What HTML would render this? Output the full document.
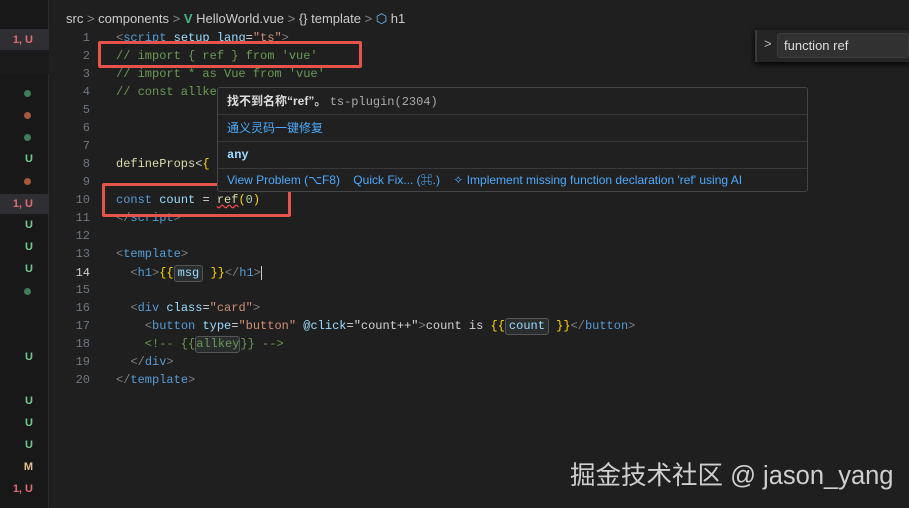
<!DOCTYPE html>
<html><head><meta charset="utf-8"><style>
*{margin:0;padding:0;box-sizing:border-box}
body{width:909px;height:508px;background:#1f1f1f;overflow:hidden;position:relative;font-family:"Liberation Sans","Noto Sans CJK SC",sans-serif}
.side{position:absolute;left:0;top:0;width:49px;height:508px;background:#181818;border-right:1px solid #2b2b2b}
.g{position:absolute;left:0;width:49px;text-align:right;padding-right:16px;font-size:11px;font-weight:bold;height:18px;line-height:18px}
.dot{position:absolute;left:24px;width:7px;height:7px;border-radius:50%}
.bc{position:absolute;left:66px;top:11px;font-size:13px;color:#cccccc;white-space:pre}
.code{position:absolute;left:0;top:29px;font-family:"Liberation Mono","Noto Sans CJK SC",monospace;font-size:12px;color:#d4d4d4}
.l{height:18px;line-height:18px;white-space:pre;position:relative}
.n{position:absolute;left:50px;width:40px;text-align:right;color:#6e7681}
.t{position:absolute;left:116px}
.c{color:#6a9955}.k{color:#569cd6}.v{color:#9cdcfe}.f{color:#dcdcaa}.s{color:#ce9178}.p{color:#808080}.y{color:#ffd700}.w{color:#d4d4d4}
.box{display:inline-block;border:1px solid #555;border-radius:3px;background:#2a2d2e;padding:0 3px;line-height:15px}
.hov{position:absolute;left:217px;top:87px;width:591px;height:105px;background:#202020;border:1px solid #454545;border-radius:3px;font-size:12px}
.hr{height:27px;line-height:27px;padding-left:9px;border-bottom:1px solid #3a3a3a;white-space:pre}
.red{position:absolute;border:3px solid #e5534b;border-radius:2px}
</style></head><body>
<div class="side"></div>
<div style="position:absolute;left:0;top:29px;width:49px;height:21px;background:#2f2f33"></div>
<div style="position:absolute;left:0;top:50px;width:49px;height:24px;background:#1b1b1b"></div>
<div style="position:absolute;left:0;top:194px;width:49px;height:20px;background:#2f2f33"></div>
<div class="g" style="top:31px;color:#e06c75">1, U</div>
<div class="dot" style="top:90px;background:#3f7d5a"></div>
<div class="dot" style="top:112px;background:#a55a3c"></div>
<div class="dot" style="top:134px;background:#3f7d5a"></div>
<div class="g" style="top:150px;color:#73c991">U</div>
<div class="dot" style="top:178px;background:#a55a3c"></div>
<div class="g" style="top:195px;color:#e06c75">1, U</div>
<div class="g" style="top:216px;color:#73c991">U</div>
<div class="g" style="top:238px;color:#73c991">U</div>
<div class="g" style="top:260px;color:#73c991">U</div>
<div class="dot" style="top:288px;background:#3f7d5a"></div>
<div class="g" style="top:348px;color:#73c991">U</div>
<div class="g" style="top:392px;color:#73c991">U</div>
<div class="g" style="top:414px;color:#73c991">U</div>
<div class="g" style="top:436px;color:#73c991">U</div>
<div class="g" style="top:458px;color:#e2c08d">M</div>
<div class="g" style="top:480px;color:#e06c75">1, U</div>

<div class="bc">src <span style="color:#888">&gt;</span> components <span style="color:#888">&gt;</span> <b style="color:#41b883">V</b> HelloWorld.vue <span style="color:#888">&gt;</span> {} template <span style="color:#888">&gt;</span> <span style="color:#75beff">⬡</span> h1</div>

<div class="code">
<div class="l"><span class="n">1</span><span class="t"><span class="p">&lt;</span><span class="k">script</span> <span class="v">setup</span> <span class="v">lang</span>=<span class="s">"ts"</span><span class="p">&gt;</span></span></div>
<div class="l"><span class="n">2</span><span class="t c">// import { ref } from 'vue'</span></div>
<div class="l"><span class="n">3</span><span class="t c">// import * as Vue from 'vue'</span></div>
<div class="l"><span class="n">4</span><span class="t c">// const allkey</span></div>
<div class="l"><span class="n">5</span></div>
<div class="l"><span class="n">6</span></div>
<div class="l"><span class="n">7</span></div>
<div class="l"><span class="n">8</span><span class="t"><span class="f">defineProps</span><span class="w">&lt;</span><span class="y">{</span></span></div>
<div class="l"><span class="n">9</span></div>
<div class="l"><span class="n">10</span><span class="t"><span class="k">const</span> <span class="v">count</span> <span class="w">=</span> <span class="f" style="text-decoration:underline wavy #f14c4c">ref</span><span class="y">(</span><span style="color:#b5cea8">0</span><span class="y">)</span></span></div>
<div class="l"><span class="n">11</span><span class="t"><span class="p">&lt;/</span><span class="k">script</span><span class="p">&gt;</span></span></div>
<div class="l"><span class="n">12</span></div>
<div class="l"><span class="n">13</span><span class="t"><span class="p">&lt;</span><span class="k">template</span><span class="p">&gt;</span></span></div>
<div class="l" style="background:#222;border-top:1px solid #282828;border-bottom:1px solid #282828"><span class="n" style="color:#ccc">14</span><span class="t">  <span class="p">&lt;</span><span class="k">h1</span><span class="p">&gt;</span><span class="y">{{</span><span class="box v">msg</span> <span class="y">}}</span><span class="p">&lt;/</span><span class="k">h1</span><span class="p">&gt;</span><span style="border-left:1px solid #ccc"></span></span></div>
<div class="l"><span class="n">15</span></div>
<div class="l"><span class="n">16</span><span class="t">  <span class="p">&lt;</span><span class="k">div</span> <span class="v">class</span>=<span class="s">"card"</span><span class="p">&gt;</span></span></div>
<div class="l"><span class="n">17</span><span class="t">    <span class="p">&lt;</span><span class="k">button</span> <span class="v">type</span>=<span class="s">"button"</span> <span class="v">@click</span>=<span class="w">"count++"</span><span class="p">&gt;</span><span class="w">count is </span><span class="y">{{</span><span class="box v">count</span> <span class="y">}}</span><span class="p">&lt;/</span><span class="k">button</span><span class="p">&gt;</span></span></div>
<div class="l"><span class="n">18</span><span class="t c">    &lt;!-- {{<span class="box c" style="padding:0">allkey</span>}} --&gt;</span></div>
<div class="l"><span class="n">19</span><span class="t">  <span class="p">&lt;/</span><span class="k">div</span><span class="p">&gt;</span></span></div>
<div class="l"><span class="n">20</span><span class="t"><span class="p">&lt;/</span><span class="k">template</span><span class="p">&gt;</span></span></div>
</div>

<div class="red" style="left:98px;top:41px;width:264px;height:27px"></div>
<div class="red" style="left:102px;top:183px;width:189px;height:34px"></div>

<div class="hov">
<div class="hr" style="color:#ddd;font-weight:bold">找不到名称“ref”。 <span style="font-family:'Liberation Mono',monospace;font-weight:normal;color:#aaa">ts-plugin(2304)</span></div>
<div class="hr" style="color:#4daafc">通义灵码一键修复</div>
<div class="hr" style="color:#9cdcfe;font-family:'Liberation Mono',monospace;font-weight:bold">any</div>
<div style="height:22px;line-height:22px;padding-left:9px;color:#4daafc;white-space:pre">View Problem (⌥F8)    Quick Fix... (⌘.)    ✧ Implement missing function declaration 'ref' using AI</div>
</div>

<div style="position:absolute;left:755px;top:30px;width:154px;height:32px;background:#252526;border-left:2px solid #3a3a3a;box-shadow:0 2px 6px #000"></div>
<div style="position:absolute;left:764px;top:36px;color:#bbb;font-size:13px">&gt;</div>
<div style="position:absolute;left:777px;top:33px;width:132px;height:25px;background:#313131;border:1px solid #3c3c3c;border-radius:3px;color:#ddd;font-size:13px;line-height:23px;padding-left:6px">function ref</div>

<div style="position:absolute;left:570px;top:455px;font-size:25.5px;color:#cfcfcf;white-space:nowrap">掘金技术社区 @ jason_yang</div>
</body></html>
